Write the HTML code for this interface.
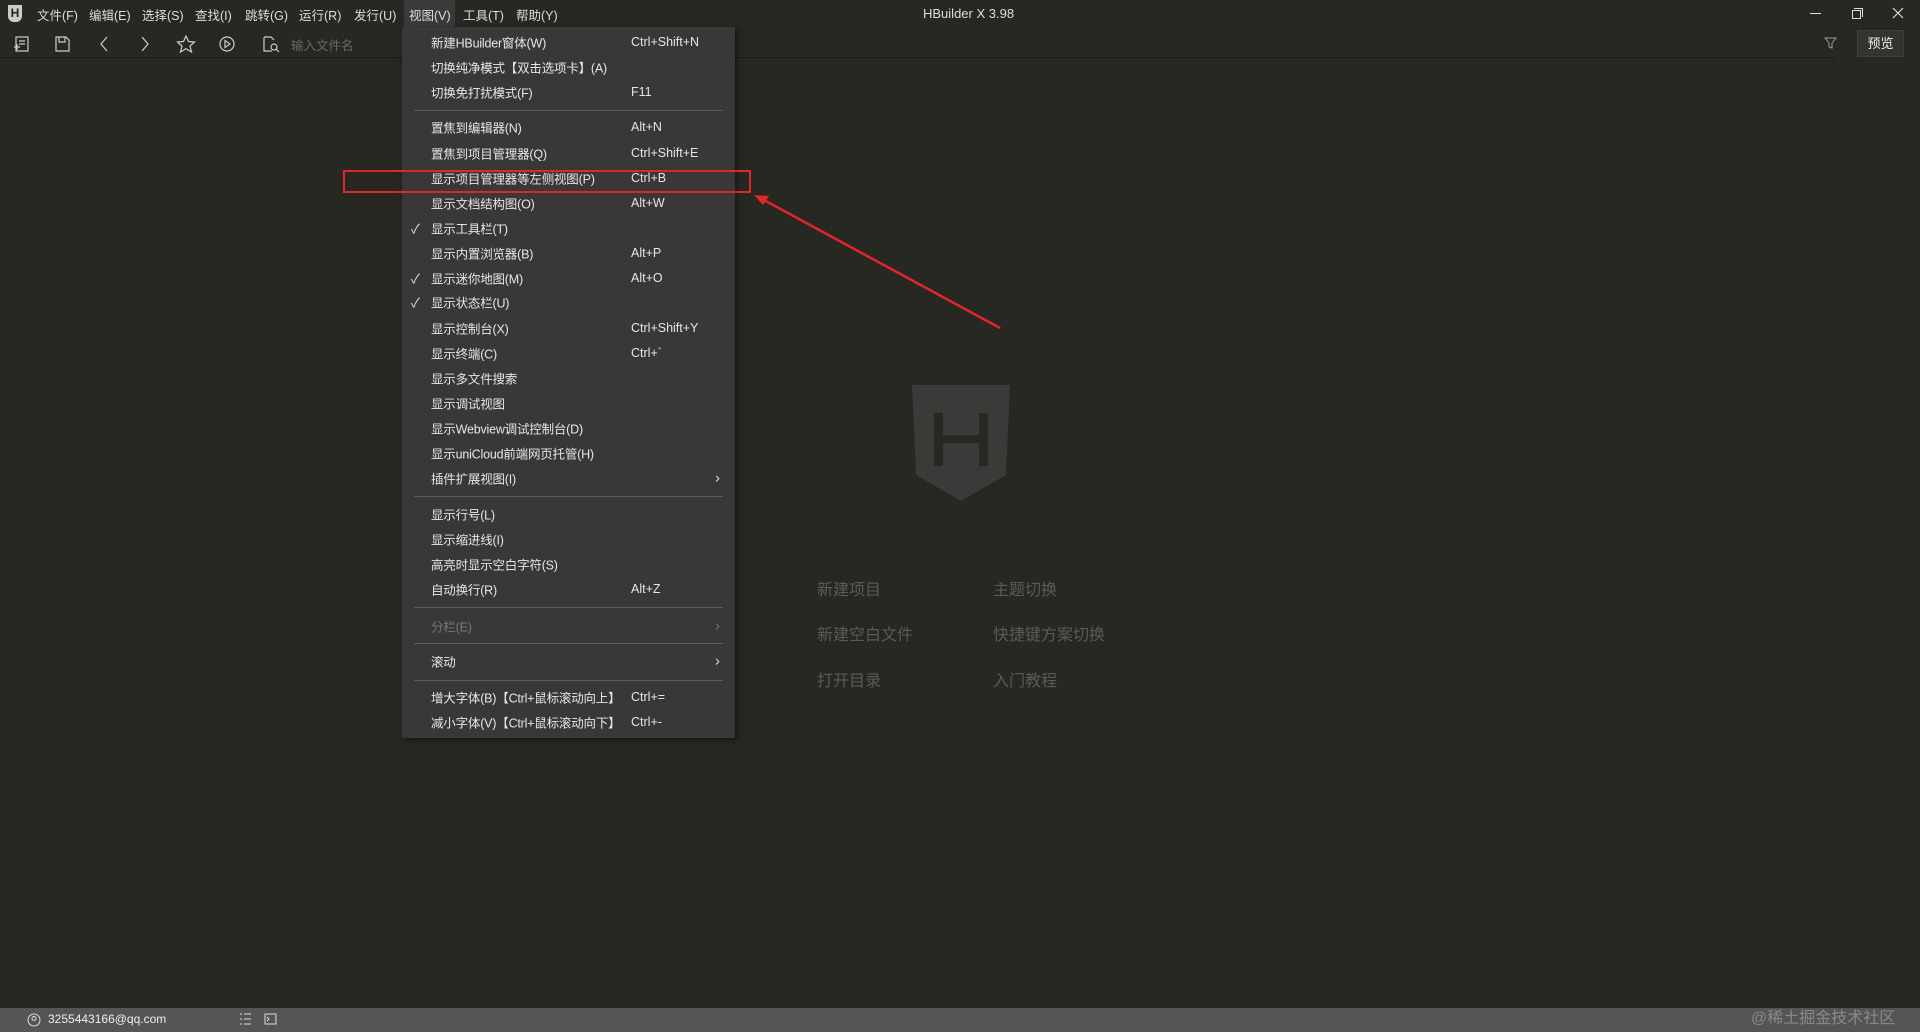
<!DOCTYPE html>
<html><head><meta charset="utf-8"><style>
*{margin:0;padding:0;box-sizing:border-box}
body{width:1920px;height:1032px;background:#272822;font-family:"Liberation Sans","Noto Sans CJK SC",sans-serif;color:#ddd;position:relative;overflow:hidden;font-size:13px}
.a{position:absolute;white-space:nowrap}
.mb span{position:absolute;top:5px;font-size:12.5px;color:#ddd}
#menu{position:absolute;left:402px;top:27px;width:333px;height:711px;background:#383838;box-shadow:2px 2px 6px rgba(0,0,0,.5)}
.it{position:absolute;left:29px;font-size:12.5px;color:#e6e6e6;transform:translateY(-50%);letter-spacing:-0.2px}
.sc{position:absolute;left:229px;font-size:12.5px;color:#e6e6e6;transform:translateY(-50%)}
.sep{position:absolute;left:12px;right:12px;height:1px;background:#5a5a5a}
.ck{position:absolute;left:9px;transform:translateY(-50%);font-size:13px;color:#ddd}
.ar{position:absolute;left:313px;transform:translateY(-50%);font-size:15px;color:#ddd}
.lk{position:absolute;font-size:16px;color:#5a5a57}
</style></head><body>
<div class="a" style="left:8px;top:5px;width:14px;height:17px;background:#ccc;border-radius:0 0 6px 6px;color:#222;font-size:12px;font-weight:bold;text-align:center;line-height:17px">H</div>
<div class="mb">
<span style="left:37px">文件(F)</span><span style="left:89px">编辑(E)</span><span style="left:142px">选择(S)</span><span style="left:195px">查找(I)</span><span style="left:245px">跳转(G)</span><span style="left:299px">运行(R)</span><span style="left:354px">发行(U)</span>
<div class="a" style="left:404px;top:0;width:51px;height:27px;background:#3a3a3a"></div>
<span style="left:409px">视图(V)</span><span style="left:463px">工具(T)</span><span style="left:516px">帮助(Y)</span>
</div>
<div class="a" style="left:923px;top:6px;font-size:13px;color:#ddd">HBuilder X 3.98</div>
<div class="a" style="left:1810px;top:13px;width:11px;height:1px;background:#ddd"></div>
<div class="a" style="left:1852px;top:10px;width:9px;height:9px;border:1px solid #ddd"></div>
<div class="a" style="left:1854px;top:8px;width:9px;height:9px;border-top:1px solid #ddd;border-right:1px solid #ddd"></div>
<svg class="a" style="left:1892px;top:7px" width="12" height="12" stroke="#ddd" stroke-width="1.2"><path d="M1 1l10 10M11 1L1 11"/></svg>
<div class="a" style="left:0;top:57px;width:402px;height:1px;background:#1a1a18"></div>
<div class="a" style="left:735px;top:57px;width:1100px;height:1px;background:#1a1a18"></div>
<svg class="a" style="left:0;top:30px" width="330" height="28" stroke="#ccc" fill="none" stroke-width="1.2">
<rect x="16" y="7" width="12" height="14"/><path d="M19 11h6M19 14h6M14 17h6M17 14v6"/>
<path d="M56 7h10l3 3v11H56zM59 7v5h6V7"/>
<path d="M107 7l-6 7 6 7"/><path d="M142 7l6 7-6 7"/>
<path d="M186 6l2.5 5.5 6 .5-4.5 4 1.5 6-5.5-3.3-5.5 3.3 1.5-6-4.5-4 6-.5z"/>
<circle cx="227" cy="14" r="7"/><path d="M225 10.5v7l5-3.5z"/>
<path d="M264 7h7l3 3M264 7v14h8"/><circle cx="274" cy="17" r="3"/><path d="M276 19l3 3"/>
</svg>
<div class="a" style="left:291px;top:35px;font-size:12.5px;color:#6a6a66">输入文件名</div>
<svg class="a" style="left:1823px;top:35px" width="16" height="16" fill="none" stroke="#999"><path d="M2 3h11l-4 5v5l-3-1V8z"/></svg>
<div class="a" style="left:1857px;top:30px;width:47px;height:27px;background:#333330;border:1px solid #3e3e3a;font-size:13px;color:#eee;text-align:center;line-height:25px">预览</div>
<svg class="a" style="left:912px;top:385px" width="98" height="116"><path d="M0 0h98l-4 90-45 26-45-26z" fill="#3a3a38"/><path d="M22 28h9v53h-9zM67 28h9v53h-9zM31 50h36v8H31z" fill="#282823"/></svg>
<div class="lk" style="left:817px;top:576px">新建项目</div><div class="lk" style="left:993px;top:576px">主题切换</div>
<div class="lk" style="left:817px;top:621px">新建空白文件</div><div class="lk" style="left:993px;top:621px">快捷键方案切换</div>
<div class="lk" style="left:817px;top:667px">打开目录</div><div class="lk" style="left:993px;top:667px">入门教程</div>
<div id="menu">
<div class="it" style="top:15px">新建HBuilder窗体(W)</div><div class="sc" style="top:15px">Ctrl+Shift+N</div>
<div class="it" style="top:40px">切换纯净模式【双击选项卡】(A)</div>
<div class="it" style="top:65px">切换免打扰模式(F)</div><div class="sc" style="top:65px">F11</div>
<div class="sep" style="top:83px"></div>
<div class="it" style="top:100px">置焦到编辑器(N)</div><div class="sc" style="top:100px">Alt+N</div>
<div class="it" style="top:126px">置焦到项目管理器(Q)</div><div class="sc" style="top:126px">Ctrl+Shift+E</div>
<div class="it" style="top:151px">显示项目管理器等左侧视图(P)</div><div class="sc" style="top:151px">Ctrl+B</div>
<div class="it" style="top:176px">显示文档结构图(O)</div><div class="sc" style="top:176px">Alt+W</div>
<div class="ck" style="top:201px">✓</div><div class="it" style="top:201px">显示工具栏(T)</div>
<div class="it" style="top:226px">显示内置浏览器(B)</div><div class="sc" style="top:226px">Alt+P</div>
<div class="ck" style="top:251px">✓</div><div class="it" style="top:251px">显示迷你地图(M)</div><div class="sc" style="top:251px">Alt+O</div>
<div class="ck" style="top:275px">✓</div><div class="it" style="top:275px">显示状态栏(U)</div>
<div class="it" style="top:301px">显示控制台(X)</div><div class="sc" style="top:301px">Ctrl+Shift+Y</div>
<div class="it" style="top:326px">显示终端(C)</div><div class="sc" style="top:326px">Ctrl+`</div>
<div class="it" style="top:351px">显示多文件搜索</div>
<div class="it" style="top:376px">显示调试视图</div>
<div class="it" style="top:401px">显示Webview调试控制台(D)</div>
<div class="it" style="top:426px">显示uniCloud前端网页托管(H)</div>
<div class="it" style="top:451px">插件扩展视图(I)</div><div class="ar" style="top:451px">›</div>
<div class="sep" style="top:469px"></div>
<div class="it" style="top:487px">显示行号(L)</div>
<div class="it" style="top:512px">显示缩进线(I)</div>
<div class="it" style="top:537px">高亮时显示空白字符(S)</div>
<div class="it" style="top:562px">自动换行(R)</div><div class="sc" style="top:562px">Alt+Z</div>
<div class="sep" style="top:580px"></div>
<div class="it" style="top:599px;color:#777">分栏(E)</div><div class="ar" style="top:599px;color:#777">›</div>
<div class="sep" style="top:616px"></div>
<div class="it" style="top:634px">滚动</div><div class="ar" style="top:634px">›</div>
<div class="sep" style="top:653px"></div>
<div class="it" style="top:670px">增大字体(B)【Ctrl+鼠标滚动向上】</div><div class="sc" style="top:670px">Ctrl+=</div>
<div class="it" style="top:695px">减小字体(V)【Ctrl+鼠标滚动向下】</div><div class="sc" style="top:695px">Ctrl+-</div>
</div>
<div class="a" style="left:343px;top:170px;width:408px;height:23px;border:2px solid #e0262a"></div>
<svg class="a" style="left:0;top:0" width="1920" height="1032"><path d="M1000 328L762 199" stroke="#e0262a" stroke-width="2.5"/><path d="M754 195l15 1-6 9z" fill="#e0262a"/></svg>
<div class="a" style="left:0;top:1008px;width:1920px;height:24px;background:#555553"></div>
<svg class="a" style="left:27px;top:1013px" width="14" height="14" fill="none" stroke="#ddd"><circle cx="7" cy="7" r="6"/><circle cx="7" cy="5.5" r="2"/></svg>
<div class="a" style="left:48px;top:1012px;font-size:12px;color:#eee">3255443166@qq.com</div>
<svg class="a" style="left:238px;top:1012px" width="50" height="14" fill="none" stroke="#ddd"><path d="M2 2h2M6 2h7M2 7h2M6 7h7M2 12h2M6 12h7"/><rect x="27" y="2" width="11" height="10"/><path d="M29 5l2 2-2 2"/></svg>
<div class="a" style="left:1751px;top:1004px;font-size:16px;color:rgba(255,255,255,.3)">@稀土掘金技术社区</div>
</body></html>
